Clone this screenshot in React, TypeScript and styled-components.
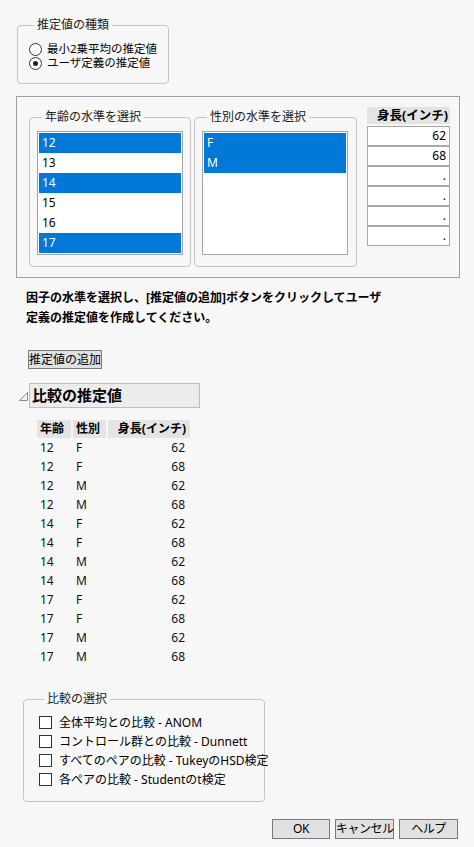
import React from 'react'
import styled, { createGlobalStyle } from 'styled-components'

const GlobalStyle = createGlobalStyle`
  html, body {
    margin: 0;
    padding: 0;
    background: #f7f7f7;
  }
  body {
    font-family: "Noto Sans", "Noto Sans CJK JP", sans-serif;
    font-size: 12px;
    color: #000;
  }
`

const ages = [
  { label: '12', on: true },
  { label: '13', on: false },
  { label: '14', on: true },
  { label: '15', on: false },
  { label: '16', on: false },
  { label: '17', on: true },
]

const sexes = [
  { label: 'F', on: true },
  { label: 'M', on: true },
]

const heights = ['62', '68', '.', '.', '.', '.']

const rows = [
  ['12', 'F', '62'],
  ['12', 'F', '68'],
  ['12', 'M', '62'],
  ['12', 'M', '68'],
  ['14', 'F', '62'],
  ['14', 'F', '68'],
  ['14', 'M', '62'],
  ['14', 'M', '68'],
  ['17', 'F', '62'],
  ['17', 'F', '68'],
  ['17', 'M', '62'],
  ['17', 'M', '68'],
]

const comparisons = [
  '全体平均との比較 - ANOM',
  'コントロール群との比較 - Dunnett',
  'すべてのペアの比較 - TukeyのHSD検定',
  '各ペアの比較 - Studentのt検定',
]

const App = () => {
  return (
    <Page>
      <GlobalStyle />
      <TypeGroup>
        <Legend>推定値の種類</Legend>
        <RadioRow>
          <Radio />
          <span>最小2乗平均の推定値</span>
        </RadioRow>
        <RadioRow>
          <Radio checked />
          <span>ユーザ定義の推定値</span>
        </RadioRow>
      </TypeGroup>

      <Panel>
        <LevelGroup right={7}>
          <Legend>年齢の水準を選択</Legend>
          <ListBox>
            {ages.map((a) => (
              <ListItem key={a.label} selected={a.on}>{a.label}</ListItem>
            ))}
          </ListBox>
        </LevelGroup>
        <LevelGroup right={8}>
          <Legend>性別の水準を選択</Legend>
          <ListBox>
            {sexes.map((s) => (
              <ListItem key={s.label} selected={s.on}>{s.label}</ListItem>
            ))}
          </ListBox>
        </LevelGroup>
        <ValueColumn>
          <ValueHeader>身長(インチ)</ValueHeader>
          <ValueCells>
            {heights.map((h, i) => (
              <ValueCell key={i}>{h}</ValueCell>
            ))}
          </ValueCells>
        </ValueColumn>
      </Panel>

      <Instruction>
        因子の水準を選択し、[推定値の追加]ボタンをクリックしてユーザ
        <br />
        定義の推定値を作成してください。
      </Instruction>

      <AddButton>推定値の追加</AddButton>

      <OutlineRow>
        <svg width="9" height="9" viewBox="0 0 9 9">
          <polygon points="0.5,8.5 8.5,0.5 8.5,8.5" fill="#f0f0f0" stroke="#8c8c8c" strokeWidth="1" />
        </svg>
        <OutlineTitle>比較の推定値</OutlineTitle>
      </OutlineRow>

      <Table>
        <HeadCell>年齢</HeadCell>
        <HeadCell>性別</HeadCell>
        <HeadCell align="right">身長(インチ)</HeadCell>
        {rows.map((r, i) => (
          <React.Fragment key={i}>
            <Cell>{r[0]}</Cell>
            <Cell>{r[1]}</Cell>
            <Cell align="right">{r[2]}</Cell>
          </React.Fragment>
        ))}
      </Table>

      <CompareGroup>
        <Legend>比較の選択</Legend>
        {comparisons.map((c) => (
          <CheckRow key={c}>
            <CheckBox />
            <span>{c}</span>
          </CheckRow>
        ))}
      </CompareGroup>

      <ButtonBar>
        <DialogButton w={58}>OK</DialogButton>
        <DialogButton w={59}>キャンセル</DialogButton>
        <DialogButton w={59}>ヘルプ</DialogButton>
      </ButtonBar>
    </Page>
  )
}

export default App

const Page = styled.div`
  display: flex;
  flex-direction: column;
  align-items: flex-start;
  width: 474px;
  min-height: 847px;
  padding-top: 18px;
  box-sizing: border-box;
`
const Legend = styled.legend`
  padding: 0 3px;
  margin-left: 5px;
  font-size: 12px;
  line-height: 14px;
  color: #222;
`
const GroupBox = styled.fieldset`
  margin: 0;
  min-width: 0;
  border: 1px solid #c4c4c4;
  border-radius: 4px;
  box-sizing: border-box;
`
const TypeGroup = styled(GroupBox)`
  margin-left: 17px;
  width: 152px;
  padding: 10px 0 13px 11px;
`
const RadioRow = styled.div`
  display: flex;
  align-items: center;
  gap: 5px;
  height: 14px;
  line-height: 14px;
  font-size: 11.5px;
  white-space: nowrap;
`
const Radio = styled.span<{ checked?: boolean }>`
  display: inline-block;
  width: 13px;
  height: 13px;
  box-sizing: border-box;
  border: 1px solid #333;
  border-radius: 50%;
  background: #fff;
  position: relative;
  flex-shrink: 0;
  &::after {
    content: '';
    display: ${(p) => (p.checked ? 'block' : 'none')};
    position: absolute;
    left: 3px;
    top: 3px;
    width: 5px;
    height: 5px;
    border-radius: 50%;
    background: #222;
  }
`
const Panel = styled.div`
  display: flex;
  align-items: flex-start;
  margin-top: 12px;
  margin-left: 16px;
  width: 444px;
  box-sizing: border-box;
  border: 1px solid #a0a0a0;
  padding: 10px 9px 10px 12px;
`
const LevelGroup = styled(GroupBox)<{ right: number }>`
  margin-top: 3px;
  margin-right: 3px;
  padding: 7px ${(p) => p.right}px 11px 7px;
`
const ListBox = styled.div`
  width: 146px;
  height: 124px;
  box-sizing: border-box;
  border: 1px solid #a3a3a3;
  background: #fff;
  padding: 1px;
`
const ListItem = styled.div<{ selected: boolean }>`
  height: 20px;
  line-height: 20px;
  padding-left: 3px;
  background: ${(p) => (p.selected ? '#0078d7' : 'transparent')};
  color: ${(p) => (p.selected ? '#fff' : '#000')};
`
const ValueColumn = styled.div`
  display: flex;
  flex-direction: column;
  margin-left: 7px;
  width: 83px;
`
const ValueHeader = styled.div`
  height: 17px;
  line-height: 17px;
  background: #e4e4e4;
  font-weight: bold;
  text-align: right;
  padding-right: 2px;
  font-size: 12.5px;
`
const ValueCells = styled.div`
  margin-top: 2px;
`
const ValueCell = styled.div`
  height: 20px;
  line-height: 18px;
  box-sizing: border-box;
  border: 1px solid #a8a8a8;
  background: #fff;
  text-align: right;
  padding-right: 3px;
`
const Instruction = styled.div`
  margin-top: 10px;
  margin-left: 26px;
  font-weight: bold;
  line-height: 20px;
  white-space: nowrap;
`
const AddButton = styled.button`
  margin-top: 22px;
  margin-left: 28px;
  height: 19px;
  width: 74px;
  padding: 0;
  font-family: inherit;
  font-size: 12px;
  line-height: 15px;
  color: #000;
  background: #e1e1e1;
  border: 1px solid #7a7a7a;
  border-radius: 0;
  white-space: nowrap;
`
const OutlineRow = styled.div`
  display: flex;
  align-items: center;
  margin-top: 14px;
  margin-left: 19px;
  gap: 1px;
  svg {
    margin-top: 2px;
  }
`
const OutlineTitle = styled.div`
  width: 171px;
  height: 25px;
  box-sizing: border-box;
  border: 1px solid #bdbdbd;
  background: #ececec;
  font-size: 15px;
  font-weight: bold;
  line-height: 23px;
  padding-left: 2px;
`
const Table = styled.div`
  display: grid;
  grid-template-columns: 34px 33px 82px;
  column-gap: 2px;
  margin-top: 12px;
  margin-left: 37px;
`
const HeadCell = styled.div<{ align?: string }>`
  height: 18px;
  line-height: 18px;
  background: #e4e4e4;
  font-weight: bold;
  text-align: ${(p) => p.align || 'left'};
  padding: 0 4px 0 3px;
`
const Cell = styled.div<{ align?: string }>`
  height: 19px;
  line-height: 19px;
  text-align: ${(p) => p.align || 'left'};
  padding: 0 5px 0 3px;
  color: #111;
`
const CompareGroup = styled(GroupBox)`
  margin-top: 26px;
  margin-left: 23px;
  width: 242px;
  padding: 7px 0 12px 15px;
`
const CheckRow = styled.div`
  display: flex;
  align-items: center;
  gap: 7px;
  height: 19px;
  line-height: 19px;
  white-space: nowrap;
`
const CheckBox = styled.span`
  display: inline-block;
  width: 13px;
  height: 13px;
  box-sizing: border-box;
  border: 1px solid #333;
  background: #fff;
  flex-shrink: 0;
`
const ButtonBar = styled.div`
  display: flex;
  gap: 5px;
  align-self: flex-end;
  margin-top: 17px;
  margin-right: 16px;
`
const DialogButton = styled.button<{ w: number }>`
  width: ${(p) => p.w}px;
  height: 20px;
  padding: 0;
  font-family: inherit;
  font-size: 12px;
  line-height: 16px;
  letter-spacing: -0.5px;
  white-space: nowrap;
  color: #000;
  background: #e1e1e1;
  border: 1px solid #7a7a7a;
  border-radius: 0;
`
